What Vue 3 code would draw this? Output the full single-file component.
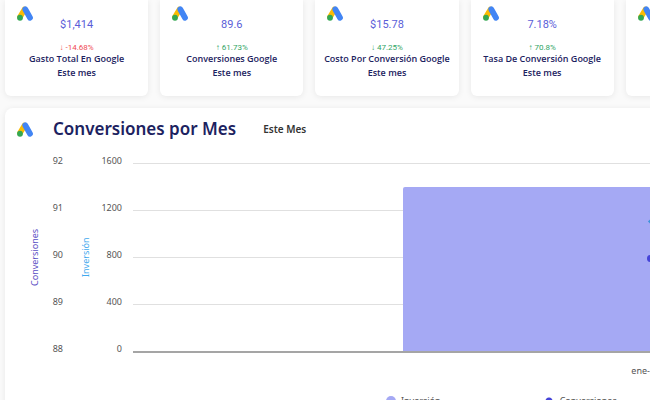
<template>
  <main class="dashboard">
    <!-- KPI cards -->
    <section class="kpis">
      <article v-for="(kpi, i) in kpis" :key="i" class="kpi">
        <svg class="ads-icon" viewBox="0 0 32 30" aria-hidden="true">
          <path d="M15 7 L6 22" stroke="#fbbc04" stroke-width="11" stroke-linecap="round" />
          <path d="M16.500 6.500 L26 23.500" stroke="#4285f4" stroke-width="11.500" stroke-linecap="round" />
          <circle cx="6" cy="23.500" r="5.800" fill="#34a853" />
        </svg>
        <template v-if="kpi.name">
          <div class="kpi-value">{{ kpi.value }}</div>
          <div class="kpi-change" :class="{ 'kpi-change--bad': kpi.bad }">{{ kpi.change }}</div>
          <div class="kpi-name">{{ kpi.name }}</div>
          <div class="kpi-name">Este mes</div>
        </template>
      </article>
    </section>

    <!-- Monthly chart -->
    <section class="panel">
      <header class="panel-head">
        <svg class="ads-icon" viewBox="0 0 32 30" aria-hidden="true">
          <path d="M15 7 L6 22" stroke="#fbbc04" stroke-width="11" stroke-linecap="round" />
          <path d="M16.500 6.500 L26 23.500" stroke="#4285f4" stroke-width="11.500" stroke-linecap="round" />
          <circle cx="6" cy="23.500" r="5.800" fill="#34a853" />
        </svg>
        <h2 class="panel-title">Conversiones por Mes</h2>
        <span class="panel-period">Este Mes</span>
      </header>

      <div class="chart">
        <div class="axis-title axis-title--conv">Conversiones</div>
        <div class="ticks">
          <span v-for="t in convTicks" :key="t">{{ t }}</span>
        </div>
        <div class="axis-title axis-title--inv">Inversión</div>
        <div class="ticks">
          <span v-for="t in invTicks" :key="t">{{ t }}</span>
        </div>
        <div class="plot-wrap">
          <div class="plot">
            <i v-for="t in invTicks" :key="t" class="grid-line" :class="{ 'grid-line--base': t === 0 }"></i>
            <div class="bar" :style="{ height: barHeight + '%' }"></div>
            <i class="point point--diamond" :style="{ bottom: '70%' }"></i>
            <i class="point" :style="{ bottom: '50%' }"></i>
          </div>
          <div class="month">ene-2025</div>
        </div>
      </div>

      <div class="legend">
        <span class="legend-item"><i class="legend-dot"></i>Inversión</span>
        <span class="legend-item"><i class="legend-line"></i>Conversiones</span>
      </div>
    </section>
  </main>
</template>

<script setup>
const kpis = [
  { value: '$1,414', change: '↓ -14.68%', name: 'Gasto Total En Google', bad: true },
  { value: '89.6', change: '↑ 61.73%', name: 'Conversiones Google' },
  { value: '$15.78', change: '↓ 47.25%', name: 'Costo Por Conversión Google' },
  { value: '7.18%', change: '↑ 70.8%', name: 'Tasa De Conversión Google' },
  {},
]

const convTicks = [92, 91, 90, 89, 88]
const invTicks = [1600, 1200, 800, 400, 0]
const barHeight = (1400 / 1600) * 100
</script>

<style>
body {
  background: #fafafa;
}
</style>

<style scoped>
.dashboard {
  height: 100vh;
  overflow: hidden;
  padding-left: 5px;
  box-sizing: border-box;
  font-family: 'Noto Sans', sans-serif;
}

/* KPI cards */
.kpis {
  display: flex;
  gap: 12px;
  margin-bottom: 12px;
}
.kpi {
  position: relative;
  flex: 0 0 22.2%;
  box-sizing: border-box;
  height: 96px;
  padding-top: 15px;
  background: #fff;
  border-radius: 0 0 6px 6px;
  box-shadow: 0 1px 6px rgba(0, 0, 0, 0.08);
  text-align: center;
  white-space: nowrap;
}
.ads-icon {
  width: 16px;
  height: 15px;
  flex: none;
}
.kpi .ads-icon {
  position: absolute;
  top: 6px;
  left: 12px;
}
.kpi-value {
  font-family: Roboto, sans-serif;
  font-size: 11px;
  line-height: 20px;
  color: #5a5ed8;
}
.kpi-change {
  margin-top: 7px;
  font-family: Roboto, sans-serif;
  font-size: 8px;
  line-height: 12px;
  color: #2fa565;
}
.kpi-change--bad {
  color: #ef4b52;
}
.kpi-name {
  font-family: 'Open Sans', sans-serif;
  font-size: 9px;
  font-weight: 600;
  line-height: 14px;
  color: #1c2260;
}
.kpi-change + .kpi-name {
  margin-top: -2px;
}

/* Panel */
.panel {
  width: 182%;
  box-sizing: border-box;
  padding-right: 10px;
  background: #fff;
  border-radius: 8px;
  box-shadow: 0 1px 6px rgba(0, 0, 0, 0.08);
}
.panel-head {
  display: flex;
  align-items: center;
  height: 42px;
  padding-left: 12px;
}
.panel-title {
  margin: 0 0 0 20px;
  font-size: 17px;
  font-weight: 600;
  line-height: 24px;
  color: #1c2260;
}
.panel-period {
  margin-left: 27px;
  font-size: 10px;
  font-weight: 600;
  color: #333;
}

/* Chart */
.chart {
  display: grid;
  grid-template-columns: 16px 20px 31px 28px 1fr;
  padding: 5px 0 0 22px;
  font-size: 9px;
  line-height: 12px;
  color: #555;
}
.axis-title {
  height: 205px;
  writing-mode: vertical-rl;
  transform: rotate(180deg);
  text-align: center;
  line-height: 16px;
}
.axis-title--conv {
  color: #5b4fc4;
}
.axis-title--inv {
  margin-left: 15px;
  color: #3fa9ee;
}
.ticks {
  display: flex;
  flex-direction: column;
  justify-content: space-between;
  height: 200px;
  text-align: right;
}
.plot-wrap {
  margin-left: 11px;
}
.plot {
  position: relative;
  display: flex;
  flex-direction: column;
  justify-content: space-between;
  height: 190px;
  margin-top: 8px;
}
.grid-line {
  height: 1px;
  background: #e0e0e0;
}
.grid-line--base {
  position: relative;
  z-index: 1;
  height: 2px;
  background: #a5a5a5;
}
.bar {
  position: absolute;
  left: 26.1%;
  bottom: 0;
  width: 47.8%;
  background: #a5a9f4;
  border-radius: 2px 2px 0 0;
}
.point {
  position: absolute;
  left: 50%;
  width: 7px;
  height: 7px;
  margin: 0 0 -4px -4px;
  border-radius: 50%;
  background: #4544d8;
}
.point--diamond {
  width: 5px;
  height: 5px;
  margin-left: -2px;
  border-radius: 0;
  background: #3b93d9;
  transform: rotate(45deg);
}
.month {
  margin-top: 12px;
  text-align: center;
}

/* Legend */
.legend {
  display: flex;
  gap: 102px;
  padding: 18px 0 8px 381px;
  font-size: 9px;
  line-height: 12px;
  color: #555;
}
.legend-item {
  display: flex;
  align-items: center;
  gap: 5px;
}
.legend-dot {
  width: 10px;
  height: 10px;
  border-radius: 50%;
  background: #a5a9f4;
}
.legend-line {
  width: 12px;
  height: 8px;
  background:
    radial-gradient(circle, #4544d8 3px, transparent 4px),
    linear-gradient(#4544d8, #4544d8) center / 100% 1px no-repeat;
}
</style>
